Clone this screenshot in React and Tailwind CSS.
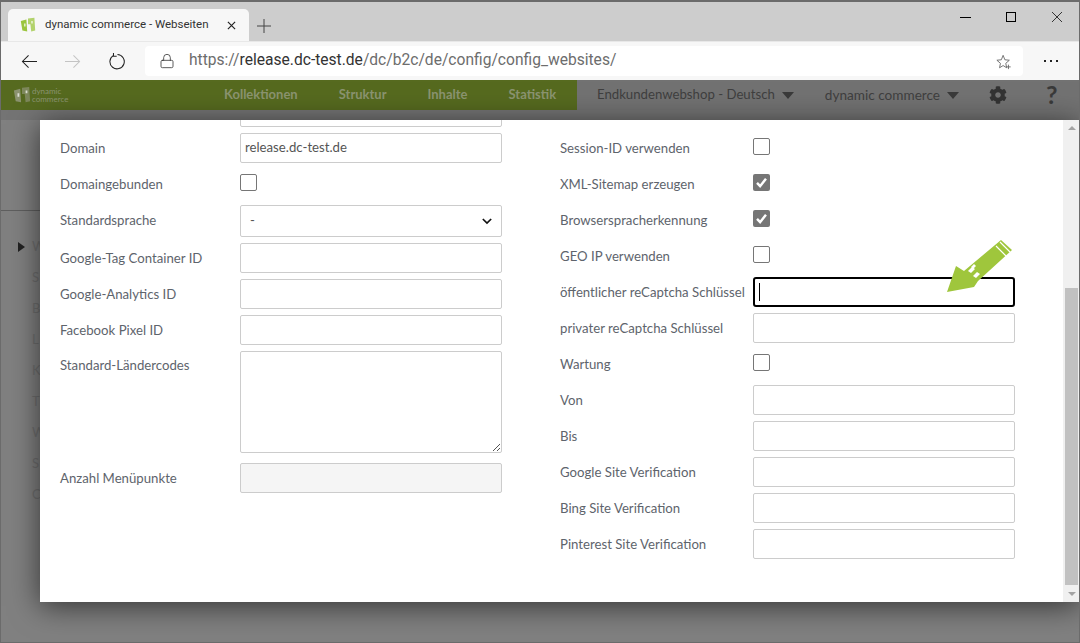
import React from 'react';
import { FaCog } from 'react-icons/fa';
import { Lock } from 'lucide-react';

const font = { fontFamily: 'Lato, "Noto Sans", sans-serif' };
const chromeFont = { fontFamily: 'Roboto, sans-serif' };

const Logo = ({ className, color = '#9bc53d' }) => (
  <svg viewBox="0 0 20 20" className={className}>
    <path d="M1 5 L8 3 L9 18 L3 17 Z" fill={color} />
    <path d="M10 2 L18 1 L19 17 L14 18 L13 9 L10 9 Z" fill={color} opacity="0.75" />
    <path d="M5 8 h2 v4 h-2 z M14 5 h2 v3 h-2 z" fill="#fff" opacity="0.7" />
  </svg>
);

const Caret = () => (
  <span className="ml-[7px] w-0 h-0 border-l-[6px] border-r-[6px] border-t-[7px] border-l-transparent border-r-transparent border-t-[#3a3a3a]" />
);

const TextInput = ({ value, disabled, focused }) => (
  <div
    className={`w-[262px] h-[30px] flex items-center rounded-[2px] text-[13.2px] px-[4px] ${
      focused ? 'border-2 border-black rounded-[3px]' : 'border border-[#ccc]'
    } ${disabled ? 'bg-[#f5f5f5]' : 'bg-white'} text-[#555]`}
  >
    {focused && <span className="w-px h-[18px] bg-black" />}
    {value}
  </div>
);

const Check = ({ checked }) =>
  checked ? (
    <div className="w-[17px] h-[17px] -mt-[3px] rounded-[2px] bg-[#767676] flex items-center justify-center">
      <svg viewBox="0 0 16 16" className="w-[13px] h-[13px]">
        <path d="M2.5 8.5 L6.3 12.5 L13.5 3.5" fill="none" stroke="#fff" strokeWidth="3" />
      </svg>
    </div>
  ) : (
    <div className="w-[17px] h-[17px] -mt-[3px] rounded-[2px] border border-[#767676] bg-white" />
  );

const Row = ({ label, h = 'h-[36px]', children, top, flush }) => (
  <div className={`flex ${h} ${top ? 'items-start' : 'items-center'}`}>
    <div className={`shrink-0 text-[13.2px] text-[#5e646c] ${top ? 'pt-[8px]' : flush ? '' : 'pt-[1px]'} w-[180px]`}>{label}</div>
    {children}
  </div>
);

const RRow = ({ label, children }) => (
  <div className="flex h-[36px] items-center">
    <div className="shrink-0 text-[13.2px] text-[#5e646c] pt-[1px] w-[193px] whitespace-nowrap">{label}</div>
    {children}
  </div>
);

const ghostLetters = ['W', 'S', 'B', 'L', 'K', 'T', 'W', 'S', 'C'];

export default function App() {
  return (
    <div style={font} className="relative w-[1080px] h-[643px] overflow-hidden bg-[#808080] border border-[#6b6b6b] border-t-2">
      {/* browser tabs */}
      <div style={chromeFont} className="h-[39px] bg-[#cdcdcd] flex items-end pl-[7px] relative">
        <div className="w-[241px] h-[32px] bg-[#f7f7f7] rounded-t-[5px] flex items-center pl-[12px] pr-[13px]">
          <Logo className="w-[16px] h-[16px]" />
          <span className="ml-[9px] text-[11.5px] text-[#333] whitespace-nowrap">dynamic commerce - Webseiten</span>
          <svg viewBox="0 0 10 10" className="w-[9px] h-[9px] ml-auto">
            <path d="M1 1 L9 9 M9 1 L1 9" stroke="#222" strokeWidth="1.3" />
          </svg>
        </div>
        <svg viewBox="0 0 14 14" className="w-[14px] h-[14px] ml-[8px] mb-[8px]">
          <path d="M7 0 V14 M0 7 H14" stroke="#444" strokeWidth="1" />
        </svg>
        <div className="ml-auto flex items-center h-[39px] pb-[9px] pr-[17px] gap-[35px]">
          <div className="w-[11px] h-px bg-black" />
          <div className="w-[10px] h-[10px] border border-black" />
          <svg viewBox="0 0 10 10" className="w-[10px] h-[10px] ml-px">
            <path d="M0 0 L10 10 M10 0 L0 10" stroke="#222" strokeWidth="0.9" />
          </svg>
        </div>
      </div>

      {/* address bar */}
      <div style={chromeFont} className="h-[39px] bg-[#f7f7f7] flex items-center border-t border-[#e8e8e8]">
        <svg viewBox="0 0 18 16" className="w-[17px] h-[15px] ml-[20px]">
          <path d="M17 8 H1.5 M8 1.5 L1.5 8 L8 14.5" fill="none" stroke="#222" strokeWidth="1.1" />
        </svg>
        <svg viewBox="0 0 18 16" className="w-[17px] h-[15px] ml-[26px]">
          <path d="M1 8 H16.5 M10 1.5 L16.5 8 L10 14.5" fill="none" stroke="#c4c4c4" strokeWidth="1.1" />
        </svg>
        <svg viewBox="0 0 18 18" className="w-[17px] h-[17px] ml-[27px]">
          <path d="M5.5 2.8 A7.6 7.6 0 1 0 10 1.6 M5.8 0 V3.4 H9.2" fill="none" stroke="#222" strokeWidth="1.1" />
        </svg>
        <div className="ml-[20px] w-[878px] h-[30px] bg-white rounded-[4px] flex items-center pl-[14px] relative">
          <Lock size={16} strokeWidth={1.2} className="text-[#333]" />
          <span className="ml-[14px] text-[15.6px] whitespace-nowrap text-[#333]">
            <span className="text-[#6d6d6d]">https://</span>release.dc-test.de<span className="text-[#6d6d6d]">/dc/b2c/de/config/config_websites/</span>
          </span>
          <svg viewBox="0 0 18 18" className="w-[16px] h-[16px] absolute right-[11px] top-[8px]">
            <path d="M8 1.5 L10 6.5 L15 7 L11 10.5 L12 15.5 L8 13 L4 15.5 L5 10.5 L1 7 L6 6.5 Z" fill="none" stroke="#666" strokeWidth="1" />
            <path d="M14 12 V17 M11.5 14.5 H16.5" stroke="#666" strokeWidth="1" />
          </svg>
        </div>
        <div className="ml-[21px] flex gap-[4px]">
          <span className="w-[2px] h-[2px] bg-[#222]" />
          <span className="w-[2px] h-[2px] bg-[#222]" />
          <span className="w-[2px] h-[2px] bg-[#222]" />
        </div>
      </div>

      {/* dimmed app nav */}
      <div className="h-[30px] flex bg-[#727272]">
        <div className="w-[576px] bg-[#566a1f] flex items-center text-[#8b9470] font-bold text-[13px]">
          <div className="flex items-center ml-[12px] w-[211px]">
            <Logo className="w-[18px] h-[18px]" color="#8b9270" />
            <div className="ml-[1px] text-[8px] leading-[8px] font-normal">dynamic<br />commerce</div>
          </div>
          <span>Kollektionen</span>
          <span className="ml-[41px]">Struktur</span>
          <span className="ml-[41px]">Inhalte</span>
          <span className="ml-[41px]">Statistik</span>
        </div>
        <div className="flex-1 flex items-center text-[#3f3f3f] text-[13.2px] pl-[20px]">
          <span className="whitespace-nowrap">Endkundenwebshop - Deutsch</span>
          <Caret />
          <span className="ml-[31px] whitespace-nowrap text-[13.6px]">dynamic commerce</span>
          <Caret />
          <FaCog className="ml-[30px] text-[#333] w-[18px] h-[18px]" />
          <span className="ml-[39px] text-[25px] font-bold text-[#3a3a3a]">?</span>
        </div>
      </div>

      {/* dimmed page behind the dialog */}
      <div className="h-[10px] bg-[#747474]" />
      <div className="w-[40px] h-[91px] border-b border-[#5f5f5f]" />
      <div className="flex flex-col pl-[17px] pt-[26px] gap-[11.5px] text-[#6f6f6f] text-[13px] w-[40px] overflow-hidden">
        <div className="flex items-center gap-[7px]">
          <span className="shrink-0 w-0 h-0 border-y-[5px] border-l-[7px] border-y-transparent border-l-[#222]" />
          <span>W</span>
        </div>
        {ghostLetters.slice(1).map((l, i) => (
          <div key={i} className="pl-[14px]">{l}</div>
        ))}
      </div>

      {/* dialog */}
      <div className="absolute left-[39px] top-[118px] w-[1039px] h-[482px] flex bg-white shadow-[0_4px_28px_rgba(0,0,0,0.6)]">
        <div className="w-[1023px] overflow-hidden">
          <div className="flex -mt-[26px]">
            <div className="w-[520px] pl-[20px]">
              <Row label=""><TextInput /></Row>
              <Row label="Domain"><TextInput value="release.dc-test.de" /></Row>
              <Row label="Domaingebunden"><Check /></Row>
              <Row label="Standardsprache" h="h-[38px]" flush>
                <div className="w-[262px] h-[32px] border border-[#ccc] rounded-[2px] flex items-center justify-between px-[9px] text-[13.2px] text-[#555]">
                  <span>-</span>
                  <svg viewBox="0 0 12 8" className="w-[10px] h-[7px]">
                    <path d="M1 1 L6 6 L11 1" fill="none" stroke="#111" strokeWidth="2" />
                  </svg>
                </div>
              </Row>
              <Row label="Google-Tag Container ID"><TextInput /></Row>
              <Row label="Google-Analytics ID"><TextInput /></Row>
              <Row label="Facebook Pixel ID"><TextInput /></Row>
              <Row label="Standard-Ländercodes" h="h-[112px]" top>
                <div className="relative w-[262px] h-[102px] mt-[3px] border border-[#ccc] rounded-[2px]">
                  <svg viewBox="0 0 10 10" className="absolute right-0 bottom-0 w-[10px] h-[10px]">
                    <path d="M9 2 L2 9 M9 6 L6 9" stroke="#555" strokeWidth="1" />
                  </svg>
                </div>
              </Row>
              <Row label="Anzahl Menüpunkte"><TextInput disabled /></Row>
            </div>
            <div className="pt-[36px]">
              <RRow label="Session-ID verwenden"><Check /></RRow>
              <RRow label="XML-Sitemap erzeugen"><Check checked /></RRow>
              <RRow label="Browserspracherkennung"><Check checked /></RRow>
              <RRow label="GEO IP verwenden"><Check /></RRow>
              <RRow label="öffentlicher reCaptcha Schlüssel"><TextInput focused /></RRow>
              <RRow label="privater reCaptcha Schlüssel"><TextInput /></RRow>
              <RRow label="Wartung"><Check /></RRow>
              <RRow label="Von"><TextInput /></RRow>
              <RRow label="Bis"><TextInput /></RRow>
              <RRow label="Google Site Verification"><TextInput /></RRow>
              <RRow label="Bing Site Verification"><TextInput /></RRow>
              <RRow label="Pinterest Site Verification"><TextInput /></RRow>
            </div>
          </div>
        </div>

        {/* scrollbar */}
        <div className="w-[16px] bg-[#f0f0f0] flex flex-col items-center pl-px">
          <div className="h-[16px] flex items-center">
            <span className="w-0 h-0 border-x-[4px] border-b-[4px] border-x-transparent border-b-[#a3a3a3]" />
          </div>
          <div className="w-[13px] mt-[152px] h-[297px] bg-[#c1c1c1]" />
          <div className="flex-1 flex items-center">
            <span className="w-0 h-0 border-x-[4px] border-t-[4px] border-x-transparent border-t-[#a3a3a3]" />
          </div>
        </div>

        {/* green arrow marker */}
        <svg viewBox="0 0 66 54" className="absolute left-[907px] top-[120px] w-[66px] h-[54px]">
          <path d="M0 52 L9 26 L17 31 L54 0 L65 10 L31 41 L27 47 Z" fill="#9fc63c" />
          <path d="M49 6 L59 16 M53 2 L63 12" stroke="#fff" strokeWidth="1.2" />
          <path d="M21 31 l4 -4 l3 2 l-4 4 z M26 36 l4 -4 l3 2 l-4 4 z M24 27 l3 -3 l2 2 l-3 3 z" fill="#fff" />
        </svg>
      </div>
    </div>
  );
}
